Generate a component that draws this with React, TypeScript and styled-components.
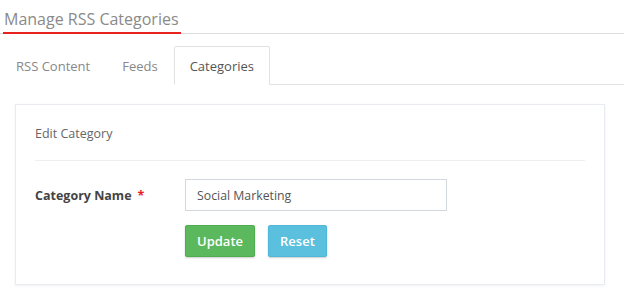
import styled, { createGlobalStyle } from 'styled-components';

const GlobalStyle = createGlobalStyle`
  body {
    margin: 0;
    background: #fff;
    font-family: "Open Sans", "Liberation Sans", sans-serif;
  }
`;

const Page = styled.div`
  width: 624px;
  height: 292px;
  overflow: hidden;
`;

const Header = styled.div`
  display: flex;
  border-bottom: 1px solid #dedede;
  padding-top: 7px;
`;

const Title = styled.h1`
  margin: 0 0 -1px 3px;
  padding: 0 0 1px 1px;
  font-size: 16px;
  font-weight: 400;
  line-height: 24px;
  color: #8a8a8a;
  border-bottom: 2px solid #e8221f;
  width: 178px;
  box-sizing: border-box;
  white-space: nowrap;
`;

const TabBar = styled.ul`
  display: flex;
  list-style: none;
  margin: 12px 0 0;
  padding: 0;
  border-bottom: 1px solid #e2e2e2;
`;

const Tab = styled.li<{ $active?: boolean }>`
  height: 37px;
  padding: 0 15px;
  display: flex;
  align-items: center;
  font-size: 13px;
  color: ${(p) => (p.$active ? '#555' : '#888')};
  border: 1px solid ${(p) => (p.$active ? '#e2e2e2' : 'transparent')};
  border-bottom: 1px solid ${(p) => (p.$active ? '#fff' : 'transparent')};
  border-radius: 2px 2px 0 0;
  margin-bottom: -1px;
  background: #fff;
`;

const Panel = styled.div`
  margin: 19px 19px 0 15px;
  border: 1px solid #e8ebef;
  box-shadow: 0 1px 3px rgba(0, 0, 0, 0.06);
  padding: 0 19px 27px 19px;
  background: #fff;
`;

const PanelHeading = styled.div`
  padding: 20px 0 17px;
  font-size: 12.5px;
  line-height: 18px;
  color: #666;
  border-bottom: 1px solid #eeeff1;
`;

const FormRow = styled.div`
  display: flex;
  align-items: center;
  margin-top: 18px;
`;

const Label = styled.label`
  width: 150px;
  font-size: 12.5px;
  font-weight: 700;
  color: #444;
`;

const Required = styled.span`
  color: #e8221f;
  margin-left: 6px;
`;

const Input = styled.input`
  width: 262px;
  height: 32px;
  box-sizing: border-box;
  border: 1px solid #d3d7de;
  padding: 0 11px;
  font-family: inherit;
  font-size: 12.3px;
  color: #555;
  outline: none;
`;

const Actions = styled.div`
  display: flex;
  gap: 13px;
  margin: 14px 0 0 150px;
`;

const Button = styled.button<{ $tone: 'green' | 'blue' }>`
  height: 32px;
  padding: 0 11px;
  border: 1px solid ${(p) => (p.$tone === 'green' ? '#4cae4c' : '#4fb8d8')};
  border-radius: 2px;
  background: ${(p) => (p.$tone === 'green' ? '#5cb85c' : '#5bc0de')};
  color: #fff;
  font-family: inherit;
  font-size: 13px;
  font-weight: 600;
  box-shadow: 0 1px 2px rgba(0, 0, 0, 0.2);
  cursor: pointer;
`;

export default function App() {
  return (
    <Page>
      <GlobalStyle />
      <Header>
        <Title>Manage RSS Categories</Title>
      </Header>
      <TabBar>
        <Tab>RSS Content</Tab>
        <Tab>Feeds</Tab>
        <Tab $active>Categories</Tab>
      </TabBar>
      <Panel>
        <PanelHeading>Edit Category</PanelHeading>
        <FormRow>
          <Label>
            Category Name<Required>*</Required>
          </Label>
          <Input defaultValue="Social Marketing" />
        </FormRow>
        <Actions>
          <Button $tone="green">Update</Button>
          <Button $tone="blue">Reset</Button>
        </Actions>
      </Panel>
    </Page>
  );
}
